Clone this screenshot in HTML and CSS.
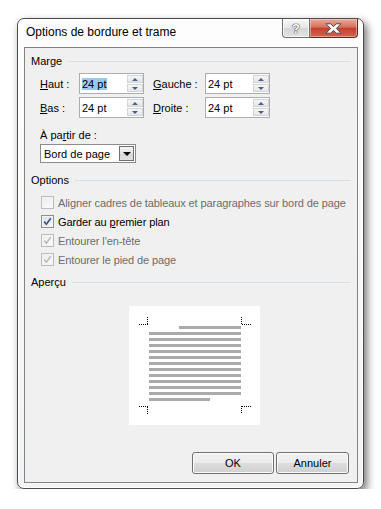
FILE: index.html
```html
<!DOCTYPE html>
<html lang="fr">
<head>
    <meta charset="UTF-8">
    <title>Options de bordure et trame</title>
    <link rel="stylesheet" href="styles.css">
</head>
<body>

<div class="window">
    <div class="titlebar">
        <span class="title">Options de bordure et trame</span>
        <div class="caption-buttons">
            <span class="cap-btn help">?</span>
            <span class="cap-btn close">
                <svg width="17" height="11" viewBox="0 0 17 11">
                    <path d="M1 0.8 H5.6 L8.5 3.6 L11.4 0.8 H16 L11.3 5.5 L16 10.2 H11.4 L8.5 7.4 L5.6 10.2 H1 L5.7 5.5 Z" fill="#fff" stroke="#4a4a4a" stroke-width="1" stroke-linejoin="round"/>
                </svg>
            </span>
        </div>
    </div>

    <div class="client">
        <div class="group-head"><span>Marge</span></div>
        <div class="fields">
            <label><u>H</u>aut :</label>
            <div class="spin">
                <span class="value"><span class="sel">24 pt</span></span>
                <span class="arrows"><b class="up"></b><b class="down"></b></span>
            </div>
            <label class="second"><u>G</u>auche :</label>
            <div class="spin">
                <span class="value">24 pt</span>
                <span class="arrows"><b class="up"></b><b class="down"></b></span>
            </div>

            <label><u>B</u>as :</label>
            <div class="spin">
                <span class="value">24 pt</span>
                <span class="arrows"><b class="up"></b><b class="down"></b></span>
            </div>
            <label class="second"><u>D</u>roite :</label>
            <div class="spin">
                <span class="value">24 pt</span>
                <span class="arrows"><b class="up"></b><b class="down"></b></span>
            </div>
        </div>

        <div class="from-label">À pa<u>r</u>tir de :</div>
        <div class="combo">
            <span>Bord de page</span>
            <span class="drop"></span>
        </div>

        <div class="group-head options-head"><span>Options</span></div>
        <ul class="checks">
            <li class="disabled">
                <span class="box"></span>
                <span class="text">Aligner cadres de tableaux et paragraphes sur bord de page</span>
            </li>
            <li>
                <span class="box"><svg width="11" height="11" viewBox="0 0 11 11"><path d="M2.2 5.6 L4.4 8.2 L8.8 2.2" fill="none" stroke="#3e5592" stroke-width="1.7"/></svg></span>
                <span class="text">Garder au <u>p</u>remier plan</span>
            </li>
            <li class="disabled">
                <span class="box"><svg width="11" height="11" viewBox="0 0 11 11"><path d="M2.2 5.6 L4.4 8.2 L8.8 2.2" fill="none" stroke="#b4b4b4" stroke-width="1.4"/></svg></span>
                <span class="text">Entourer l'en-tête</span>
            </li>
            <li class="disabled">
                <span class="box"><svg width="11" height="11" viewBox="0 0 11 11"><path d="M2.2 5.6 L4.4 8.2 L8.8 2.2" fill="none" stroke="#b4b4b4" stroke-width="1.4"/></svg></span>
                <span class="text">Entourer le pied de page</span>
            </li>
        </ul>

        <div class="group-head preview-head"><span>Aperçu</span></div>
        <div class="preview">
            <svg width="131" height="119" viewBox="0 0 131 119" shape-rendering="crispEdges">
                <g fill="#aaaaaa">
                    <rect x="50" y="20" width="62" height="3"/>
                    <rect x="20" y="26" width="92" height="3"/>
                    <rect x="20" y="32" width="92" height="3"/>
                    <rect x="20" y="38" width="92" height="3"/>
                    <rect x="20" y="44" width="92" height="3"/>
                    <rect x="20" y="50" width="92" height="3"/>
                    <rect x="20" y="56" width="92" height="3"/>
                    <rect x="20" y="62" width="92" height="3"/>
                    <rect x="20" y="68" width="92" height="3"/>
                    <rect x="20" y="74" width="92" height="3"/>
                    <rect x="20" y="80" width="92" height="3"/>
                    <rect x="20" y="86" width="92" height="3"/>
                    <rect x="20" y="92" width="61" height="3"/>
                </g>
                <g stroke="#000" stroke-width="1" stroke-dasharray="1 1" fill="none">
                    <path d="M10 18.5 H19 M18.5 11 V18"/>
                    <path d="M113 18.5 H122 M112.5 11 V19"/>
                    <path d="M10 100.5 H19 M18.5 101 V108"/>
                    <path d="M113 100.5 H122 M112.5 100 V108"/>
                </g>
            </svg>
        </div>

        <div class="buttons">
            <button class="ok">OK</button>
            <button class="cancel">Annuler</button>
        </div>
    </div>
</div>

</body>
</html>
```

FILE: styles.css
```css
* {
    box-sizing: border-box;
}
body {
    margin: 0;
    background: #fff;
    font-family: "Liberation Sans", Arial, sans-serif;
    font-size: 11px;
    color: #000;
}
u {
    text-decoration: underline;
    text-underline-offset: 1px;
}

/* fenetre */
.window {
    margin: 18px 0 0 17px;
    width: 347px;
    height: 471px;
    border: 1px solid #4c4c4c;
    border-radius: 7px;
    background: linear-gradient(#fdfdfd, #f3f4f5);
    box-shadow: 3px 4px 9px rgba(0, 0, 0, 0.55), inset 0 0 0 1px #fff;
    display: flex;
    flex-direction: column;
}
.titlebar {
    height: 28px;
    display: flex;
    justify-content: space-between;
    align-items: flex-start;
    padding: 0 5px 0 8px;
}
.title {
    font-size: 12px;
    line-height: 16px;
    margin-top: 5px;
}
.caption-buttons {
    display: flex;
}
.cap-btn {
    height: 19px;
    display: flex;
    align-items: center;
    justify-content: center;
    border: 1px solid #707070;
    border-top: none;
}
.help {
    width: 28px;
    border-radius: 0 0 0 4px;
    background: linear-gradient(#f7f7f7, #e6e6e6 50%, #d6d6d6 51%, #e2e2e2);
    font-weight: bold;
    font-size: 13px;
    color: #fff;
    text-shadow: 0 0 1px #444, 0 0 1px #444, 0 0 1px #444;
    box-shadow: inset 0 0 0 1px rgba(255, 255, 255, 0.7);
}
.close {
    width: 48px;
    border-left: none;
    border-color: #5e2b23;
    border-radius: 0 0 4px 0;
    background: linear-gradient(#e9aa9c, #d5715d 45%, #c4402c 52%, #d2634f);
    box-shadow: inset 0 0 0 1px rgba(255, 220, 210, 0.5);
}

/* zone client */
.client {
    margin: 0 5px 5px 6px;
    flex: 1;
    border: 1px solid #838383;
    background: #f0f0f0;
    padding: 6px 6px 0 6px;
}
.group-head {
    display: flex;
    align-items: center;
    height: 14px;
    line-height: 14px;
}
.group-head::after {
    content: "";
    flex: 1;
    border-top: 1px solid #d5dfe5;
    margin-left: 6px;
}

.fields {
    display: grid;
    grid-template-columns: 39px 65px 61px 65px;
    grid-auto-rows: 21px;
    row-gap: 3px;
    margin: 5px 0 0 9px;
}
.fields label {
    align-self: center;
    line-height: 14px;
}
.fields .second {
    padding-left: 9px;
}
.spin {
    display: flex;
    align-items: center;
    border: 1px solid #abadb3;
    background: #fff;
}
.value {
    padding-left: 2px;
    line-height: 14px;
}
.sel {
    background: #99c9ef;
    padding: 0 1px 0 0;
}
.arrows {
    margin-left: auto;
    width: 16px;
    height: 100%;
    display: flex;
    flex-direction: column;
    gap: 1px;
    padding: 1px 0 1px 0;
}
.arrows b {
    flex: 1;
    display: flex;
    align-items: center;
    justify-content: center;
    border: 1px solid #d2d4d8;
    background: linear-gradient(#f6f6f6, #e4e5e8);
}
.arrows b::before {
    content: "";
    border-left: 3px solid transparent;
    border-right: 3px solid transparent;
}
.arrows .up::before {
    border-bottom: 3px solid #4d5e8c;
}
.arrows .down::before {
    border-top: 3px solid #4d5e8c;
}

.from-label {
    margin: 10px 0 0 9px;
    line-height: 14px;
}
.combo {
    margin: 2px 0 0 9px;
    width: 96px;
    height: 19px;
    border: 1px solid #8c8c8c;
    background: #fff;
    display: flex;
    align-items: center;
    justify-content: space-between;
    padding: 1px 1px 1px 3px;
}
.drop {
    width: 15px;
    height: 15px;
    border: 1px solid #707070;
    background: linear-gradient(#f4f4f4, #e2e2e2 50%, #d6d6d6 51%, #e0e0e0);
    display: flex;
    align-items: center;
    justify-content: center;
}
.drop::before {
    content: "";
    border-left: 4px solid transparent;
    border-right: 4px solid transparent;
    border-top: 4px solid #000;
}

.options-head {
    margin-top: 10px;
}
.checks {
    list-style: none;
    margin: 6px 0 0 10px;
    padding: 0;
}
.checks li {
    height: 19px;
    display: flex;
    align-items: center;
    line-height: 14px;
    white-space: nowrap;
}
.checks .text {
    letter-spacing: -0.1px;
}
.box {
    flex: none;
    width: 13px;
    height: 13px;
    margin-right: 4px;
    border: 1px solid #8e8f8f;
    background: linear-gradient(135deg, #dcdcdc, #f8f8f8);
    box-shadow: inset 0 0 0 1px #f4f4f4;
    display: flex;
    align-items: center;
    justify-content: center;
}
.box svg {
    display: block;
}
.disabled {
    color: #6d6d6d;
}
.disabled .box {
    border-color: #bcbcbc;
    background: linear-gradient(135deg, #ececec, #fbfbfb);
}

.preview-head {
    margin-top: 6px;
}
.preview {
    margin: 17px 0 0 98px;
    width: 131px;
    height: 119px;
    background: #fff;
}
.preview svg {
    display: block;
}

.buttons {
    display: flex;
    justify-content: flex-end;
    gap: 2px;
    margin: 27px 2px 0 0;
}
button {
    height: 22px;
    font-family: inherit;
    font-size: 11px;
    color: #000;
    border: 1px solid #707070;
    border-radius: 3px;
    background: linear-gradient(#f2f2f2, #ebebeb 50%, #dddddd 51%, #cfcfcf);
    box-shadow: inset 0 0 0 1px #fbfbfb;
    padding: 0;
}
.ok {
    width: 82px;
}
.cancel {
    width: 73px;
}
```
